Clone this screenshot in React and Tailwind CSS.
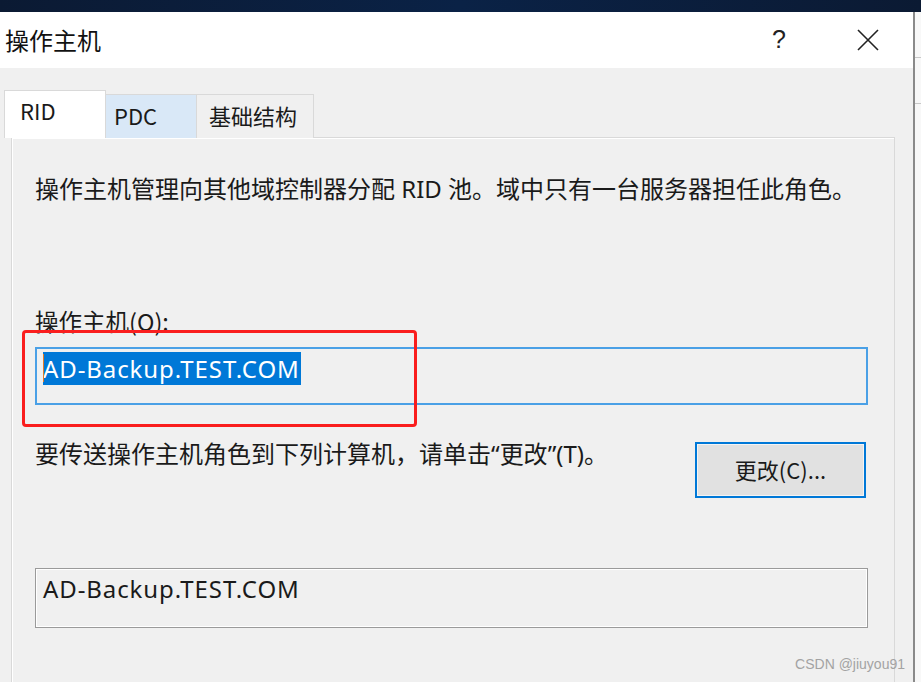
import React from "react";

const cjk = "font-['Noto_Sans_CJK_SC','Noto_Sans',sans-serif]";
const latin = "font-['Noto_Sans','Noto_Sans_CJK_SC',sans-serif]";

function Tab({ label, active, tone }) {
  if (active) {
    return (
      <div className="relative z-10 w-[102px] h-[48px] bg-white border border-b-0 border-[#d9d9d9] pl-[15px] pt-[5px] text-[22px] leading-[28px] text-[#1a1a1a]">
        {label}
      </div>
    );
  }
  return (
    <div
      className={
        "h-[44px] border border-l-0 border-b-0 border-[#d9d9d9] pt-[6px] text-[22px] leading-[28px] text-[#1a1a1a] " +
        (tone === "blue" ? "w-[91px] bg-[#d9e8f7] pl-[8px]" : "w-[117px] bg-[#f0f0f0] pl-[12px]")
      }
    >
      {label}
    </div>
  );
}

export default function App() {
  return (
    <div className={`relative w-[921px] h-[682px] overflow-hidden bg-[#f6f6f6] flex flex-col ${cjk}`}>
      <div className="h-[12px] shrink-0 bg-gradient-to-r from-[#0b1a33] via-[#0a2246] to-[#0b1a33]" />

      <div className="flex flex-1">
        <div className="w-[915px] flex flex-col border-r-2 border-[#8a8a8a]">
          {/* title bar */}
          <div className="h-[56px] shrink-0 bg-white flex items-center pl-[5px]">
            <span className="text-[24px] leading-[30px] text-[#111]">操作主机</span>
            <span className="ml-auto text-[25px] text-[#222] font-['Liberation_Sans',sans-serif]">?</span>
            <svg className="ml-[70px] mr-[33px]" width="24" height="24" viewBox="0 0 24 24">
              <path d="M2 2 L22 22 M22 2 L2 22" stroke="#222" strokeWidth="1.6" fill="none" />
            </svg>
          </div>

          {/* body */}
          <div className="flex-1 bg-[#f0f0f0] pt-[22px]">
            <div className="flex items-end pl-[4px]">
              <Tab label="RID" active />
              <Tab label="PDC" tone="blue" />
              <Tab label="基础结构" />
            </div>

            <div className="ml-[11px] -mt-px w-[884px] h-[600px] border border-[#d9d9d9] shadow-[inset_1px_1px_0_#ffffff] bg-[#f0f0f0] pl-[23px] pt-[36px] text-[24px] leading-[28px] text-[#1a1a1a]">
              <div className="whitespace-nowrap">
                操作主机管理向其他域控制器分配<span className={latin}> RID </span>池。域中只有一台服务器担任此角色。
              </div>

              <div className="mt-[104px] text-[23.5px]">操作主机(O):</div>

              <div className="mt-[12px] w-[833px] h-[58px] border-2 border-[#4aa0e6] bg-[#f0f0f0] pl-[6px] pt-[3px]">
                <span className={`relative inline-block h-[33px] leading-[33px] bg-[#0078d7] text-white text-[24px] tracking-[0.9px] pr-[1px] ${latin}`}>
                  <span className="absolute left-0 top-[2px] w-[1px] h-[28px] bg-[#e07b2a]" />
                  AD-Backup.TEST.COM
                </span>
              </div>

              <div className="mt-[34px] w-[833px] flex justify-between items-start">
                <div className="whitespace-nowrap">
                  要传送操作主机角色到下列计算机，请单击<span className={latin}>“</span>更改<span className={latin}>”(T)</span>。
                </div>
                <button className="mt-[3px] mr-[2px] w-[171px] h-[56px] border-2 border-[#0078d7] shadow-[inset_0_0_0_1px_#f4f4f4] bg-[#e1e1e1] text-[22px] text-[#1a1a1a] flex items-center justify-center pb-[3px]">
                  更改(C)...
                </button>
              </div>

              <div className={`mt-[70px] w-[833px] h-[60px] border border-[#9a9a9a] shadow-[inset_1px_1px_0_#ffffff,inset_-1px_-1px_0_#ffffff] bg-[#f0f0f0] pl-[7px] pt-[6px] text-[24px] tracking-[0.9px] ${latin}`}>
                AD-Backup.TEST.COM
              </div>
            </div>
          </div>
        </div>

        <div className="flex-1 bg-[#f8f8f8] flex flex-col">
          <div className="h-[45px]" />
          <div className="h-px bg-[#c8c8c8]" />
          <div className="h-[45px]" />
          <div className="h-px bg-[#c8c8c8]" />
        </div>
      </div>

      {/* red highlight box */}
      <div className="absolute left-[22px] top-[330px] w-[395px] h-[97px] border-[3px] border-[#fa1e1e] rounded-[4px]" />

      <div className="absolute right-[16px] bottom-[7px] text-[14px] text-[#a3a3a3] font-['Liberation_Sans',sans-serif]">
        CSDN @jiuyou91
      </div>
    </div>
  );
}
